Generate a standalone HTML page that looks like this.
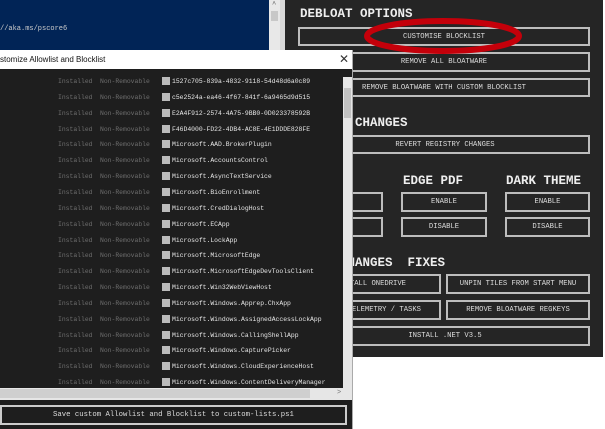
<!DOCTYPE html>
<html><head><style>
*{margin:0;padding:0;box-sizing:border-box}
body{width:605px;height:429px;overflow:hidden;background:#fff;position:relative;font-family:"Liberation Mono",monospace}
.a{position:absolute}
.btn{position:absolute;border:2px solid #bdbdbd;color:#ddd;font-size:7.2px;display:flex;align-items:center;justify-content:center;white-space:nowrap;overflow:hidden}
.h{position:absolute;color:#eee;font-weight:bold;font-size:12.5px;white-space:nowrap}
.row{position:absolute;left:0;height:16px;font-size:6.4px;white-space:nowrap}
.row .i{position:absolute;left:58px;top:0;color:#6e6e6e}
.row .n{position:absolute;left:100px;top:0;color:#6e6e6e}
.row .c{position:absolute;left:162px;top:-1px;width:8px;height:8px;background:#bbb}
.row .t{position:absolute;left:172px;top:0;color:#e6e6e6}
</style></head><body>
<div class="a" style="left:0;top:0;width:269px;height:50px;background:#012456"></div>
<div class="a" style="left:0;top:25px;color:#ccc;font-size:7px">//aka.ms/pscore6</div>
<div class="a" style="left:269px;top:0;width:11px;height:50px;background:#e8e8e8"></div>
<div class="a" style="left:271px;top:11px;width:7px;height:10px;background:#c8c8c8"></div>
<div class="a" style="left:272px;top:1px;font-size:7px;color:#555">^</div>
<div class="a" style="left:280px;top:0;width:5px;height:50px;background:#d8d8d8"></div>
<div class="a" style="left:285px;top:0;width:318px;height:357px;background:#252525"></div>
<div class="h" style="left:300px;top:7px">DEBLOAT OPTIONS</div>
<div class="btn" style="left:298px;top:27px;width:292px;height:19px">CUSTOMISE BLOCKLIST</div>
<div class="btn" style="left:298px;top:52px;width:292px;height:20px">REMOVE ALL BLOATWARE</div>
<div class="btn" style="left:298px;top:78px;width:292px;height:19px">REMOVE BLOATWARE WITH CUSTOM BLOCKLIST</div>
<div class="h" style="left:340px;top:116px">Y CHANGES</div>
<div class="btn" style="left:300px;top:135px;width:290px;height:19px">REVERT REGISTRY CHANGES</div>
<div class="h" style="left:403px;top:174px">EDGE PDF</div>
<div class="h" style="left:506px;top:174px">DARK THEME</div>
<div class="btn" style="left:330px;top:192px;width:53px;height:20px"></div>
<div class="btn" style="left:401px;top:192px;width:86px;height:20px">ENABLE</div>
<div class="btn" style="left:505px;top:192px;width:85px;height:20px">ENABLE</div>
<div class="btn" style="left:330px;top:217px;width:53px;height:20px"></div>
<div class="btn" style="left:401px;top:217px;width:86px;height:20px">DISABLE</div>
<div class="btn" style="left:505px;top:217px;width:85px;height:20px">DISABLE</div>
<div class="h" style="left:340px;top:256px">CHANGES&nbsp;&nbsp;FIXES</div>
<div class="btn" style="left:300px;top:274px;width:141px;height:20px;justify-content:flex-end;padding-right:33px">INSTALL ONEDRIVE</div>
<div class="btn" style="left:446px;top:274px;width:144px;height:20px">UNPIN TILES FROM START MENU</div>
<div class="btn" style="left:300px;top:300px;width:141px;height:20px;justify-content:flex-end;padding-right:18px">TELEMETRY / TASKS</div>
<div class="btn" style="left:446px;top:300px;width:144px;height:20px">REMOVE BLOATWARE REGKEYS</div>
<div class="btn" style="left:300px;top:326px;width:290px;height:20px">INSTALL .NET V3.5</div>
<svg class="a" style="left:360px;top:14px" width="170" height="44"><ellipse cx="83" cy="22" rx="76" ry="15" fill="none" stroke="#c4000a" stroke-width="6"/></svg>
<div class="a" style="left:0;top:50px;width:353px;height:379px;background:#1e1e1e;border-right:1px solid #aaa"></div>
<div class="a" style="left:0;top:50px;width:352px;height:19px;background:#fff"></div>
<div class="a" style="left:0;top:55px;font-family:'Liberation Sans',sans-serif;font-size:8px;color:#111">stomize Allowlist and Blocklist</div>
<div class="a" style="left:339px;top:52px;font-family:'Liberation Sans',sans-serif;font-size:12px;color:#333">✕</div>
<div class="a" style="left:343px;top:77px;width:9px;height:312px;background:#e6e6e6"></div>
<div class="a" style="left:344px;top:88px;width:7px;height:30px;background:#c2c2c2"></div>
<div class="a" style="left:0;top:388px;width:352px;height:12px;background:#e6e6e6"></div>
<div class="a" style="left:0;top:389px;width:310px;height:9px;background:#cfcfcf"></div>
<div class="a" style="left:337px;top:389px;font-size:7px;color:#777">&gt;</div>
<div id="list"></div>
<div class="btn" style="left:0;top:405px;width:347px;height:20px;font-size:7.3px;border-color:#ccc;justify-content:flex-start;padding-left:51px">Save custom Allowlist and Blocklist to custom-lists.ps1</div>
<script>
var n=["1527c705-839a-4832-9118-54d48d6a0c89","c5e2524a-ea46-4f67-841f-6a9465d9d515","E2A4F912-2574-4A75-9BB0-0D023378592B","F46D4000-FD22-4DB4-AC8E-4E1DDDE828FE","Microsoft.AAD.BrokerPlugin","Microsoft.AccountsControl","Microsoft.AsyncTextService","Microsoft.BioEnrollment","Microsoft.CredDialogHost","Microsoft.ECApp","Microsoft.LockApp","Microsoft.MicrosoftEdge","Microsoft.MicrosoftEdgeDevToolsClient","Microsoft.Win32WebViewHost","Microsoft.Windows.Apprep.ChxApp","Microsoft.Windows.AssignedAccessLockApp","Microsoft.Windows.CallingShellApp","Microsoft.Windows.CapturePicker","Microsoft.Windows.CloudExperienceHost","Microsoft.Windows.ContentDeliveryManager"];
var h="";for(var i=0;i<n.length;i++){h+='<div class="row" style="top:'+(78+i*15.85)+'px"><span class="i">Installed</span><span class="n">Non-Removable</span><span class="c"></span><span class="t">'+n[i]+'</span></div>';}
document.getElementById("list").innerHTML=h;
</script>
</body></html>
